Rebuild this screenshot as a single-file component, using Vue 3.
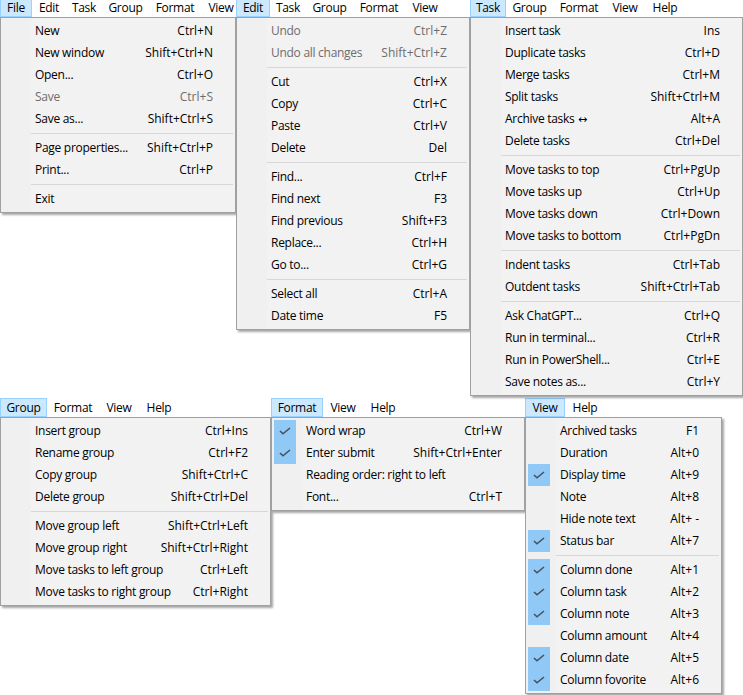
<script setup>
const sep = { sep: true }
const it = (label, key = '', extra = {}) => ({ label, key, ...extra })
const bars = ['File', 'Edit', 'Task', 'Group', 'Format', 'View', 'Help']
const tabWidth = { File: 32, Edit: 34, Task: 36, Group: 47, Format: 52, View: 40, Help: 40 }
const dis = { off: true }
const chk = { on: true }
const rows = [
  [
    { name: 'File', tabs: 6, start: 0, width: 236, items: [
      it('New', 'Ctrl+N'), it('New window', 'Shift+Ctrl+N'), it('Open...', 'Ctrl+O'), it('Save', 'Ctrl+S', dis), it('Save as...', 'Shift+Ctrl+S'), sep,
      it('Page properties...', 'Shift+Ctrl+P'), it('Print...', 'Ctrl+P'), sep, it('Exit') ] },
    { name: 'Edit', tabs: 5, start: 1, width: 234, items: [
      it('Undo', 'Ctrl+Z', dis), it('Undo all changes', 'Shift+Ctrl+Z', dis), sep,
      it('Cut', 'Ctrl+X'), it('Copy', 'Ctrl+C'), it('Paste', 'Ctrl+V'), it('Delete', 'Del'), sep,
      it('Find...', 'Ctrl+F'), it('Find next', 'F3'), it('Find previous', 'Shift+F3'), it('Replace...', 'Ctrl+H'), it('Go to...', 'Ctrl+G'), sep,
      it('Select all', 'Ctrl+A'), it('Date time', 'F5') ] },
    { name: 'Task', tabs: 5, start: 2, width: 273, items: [
      it('Insert task', 'Ins'), it('Duplicate tasks', 'Ctrl+D'), it('Merge tasks', 'Ctrl+M'), it('Split tasks', 'Shift+Ctrl+M'), it('Archive tasks', 'Alt+A', { arrow: true }), it('Delete tasks', 'Ctrl+Del'), sep,
      it('Move tasks to top', 'Ctrl+PgUp'), it('Move tasks up', 'Ctrl+Up'), it('Move tasks down', 'Ctrl+Down'), it('Move tasks to bottom', 'Ctrl+PgDn'), sep,
      it('Indent tasks', 'Ctrl+Tab'), it('Outdent tasks', 'Shift+Ctrl+Tab'), sep,
      it('Ask ChatGPT...', 'Ctrl+Q'), it('Run in terminal...', 'Ctrl+R'), it('Run in PowerShell...', 'Ctrl+E'), it('Save notes as...', 'Ctrl+Y') ] }
  ],
  [
    { name: 'Group', tabs: 4, start: 3, width: 271, items: [
      it('Insert group', 'Ctrl+Ins'), it('Rename group', 'Ctrl+F2'), it('Copy group', 'Shift+Ctrl+C'), it('Delete group', 'Shift+Ctrl+Del'), sep,
      it('Move group left', 'Shift+Ctrl+Left'), it('Move group right', 'Shift+Ctrl+Right'), it('Move tasks to left group', 'Ctrl+Left'), it('Move tasks to right group', 'Ctrl+Right') ] },
    { name: 'Format', tabs: 3, start: 4, width: 254, items: [
      it('Word wrap', 'Ctrl+W', chk), it('Enter submit', 'Shift+Ctrl+Enter', chk), it('Reading order: right to left'), it('Font...', 'Ctrl+T') ] },
    { name: 'View', tabs: 2, start: 5, width: 197, items: [
      it('Archived tasks', 'F1'), it('Duration', 'Alt+0'), it('Display time', 'Alt+9', chk), it('Note', 'Alt+8'), it('Hide note text', 'Alt+ -'), it('Status bar', 'Alt+7', chk), sep,
      it('Column done', 'Alt+1', chk), it('Column task', 'Alt+2', chk), it('Column note', 'Alt+3', chk), it('Column amount', 'Alt+4'), it('Column date', 'Alt+5', chk), it('Column fovorite', 'Alt+6', chk) ] }
  ]
]
const tabsOf = (m) => bars.slice(m.start, m.start + m.tabs)
</script>

<template>
  <div class="page">
    <div v-for="(row, r) in rows" :key="r" class="row" :class="r === 0 ? 'row-top' : 'row-bottom'">
      <section v-for="m in row" :key="m.name" class="menu" :style="{ width: m.width + 'px' }">
        <nav class="bar">
          <span v-for="(t, i) in tabsOf(m)" :key="t" class="tab" :class="{ active: i === 0 }" :style="{ width: tabWidth[t] + 'px' }">{{ t }}</span>
        </nav>
        <div class="panel">
          <template v-for="(e, i) in m.items" :key="i">
            <div v-if="e.sep" class="sep"></div>
            <div v-else class="item" :class="{ off: e.off }">
              <span class="gutter" :class="{ on: e.on }">
                <svg v-if="e.on" width="16" height="16" viewBox="0 0 16 16"><path d="M3 8 L6 10.8 L13 5" fill="none" stroke="#47525e" stroke-width="1.6"/></svg>
              </span>
              <span class="label">{{ e.label }}<span v-if="e.arrow" class="arrow"> ↔</span></span>
              <span class="key">{{ e.key }}</span>
            </div>
          </template>
        </div>
      </section>
    </div>
  </div>
</template>

<style>
html, body { margin: 0; background: #fff; }
</style>

<style scoped>
.page {
  width: 743px;
  height: 695px;
  overflow: hidden;
  font: 12px/16px "Open Sans", sans-serif;
  color: #000;
  letter-spacing: -0.28px;
}
.row { display: flex; }
.row-bottom { margin-top: 2px; }
.menu { flex: none; }
.bar { display: flex; height: 19px; }
.row-top .bar { height: 17px; align-items: flex-end; }
.tab {
  flex: none;
  height: 19px;
  box-sizing: border-box;
  padding-top: 1px;
  border: 1px solid transparent;
  text-align: center;
  white-space: nowrap;
  line-height: 16px;
}
.tab.active { background: #cce8ff; border-color: #99d1ff; }
.panel {
  position: relative;
  z-index: 1;
  box-sizing: border-box;
  background: linear-gradient(90deg, #f0f0f0 30px, #f2f2f2 30px);
  border: 1px solid #a0a0a0;
  padding: 2px;
  box-shadow: 2px 2px 2px rgba(0,0,0,.35);
}
.item { display: flex; align-items: center; height: 22px; }
.gutter { flex: none; width: 22px; height: 22px; margin-right: 10px; display: flex; align-items: center; justify-content: center; }
.gutter.on { background: #90c8f6; }
.label { flex: 1; white-space: nowrap; }
.arrow { font-family: "DejaVu Sans", sans-serif; font-size: 11px; letter-spacing: 0; }
.key { flex: none; white-space: nowrap; margin-right: 20px; letter-spacing: 0; }
.off { color: #6d6d6d; }
.sep { height: 1px; background: #d7d7d7; margin: 3px 0 3px 28px; }
</style>
